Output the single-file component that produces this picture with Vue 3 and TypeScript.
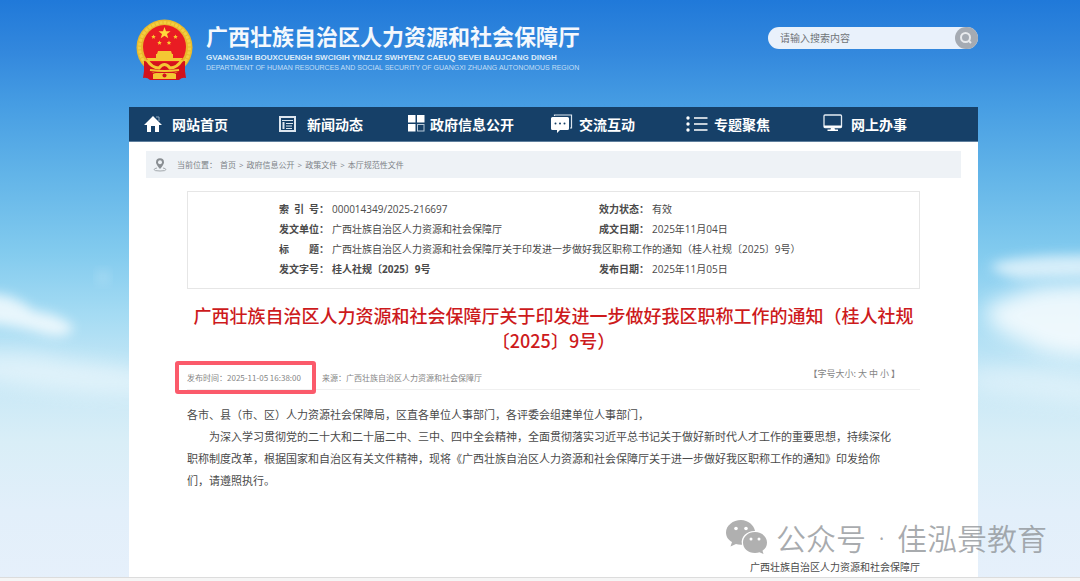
<script setup lang="ts">
import { ref } from 'vue'

type IconName = 'home' | 'news' | 'grid' | 'chat' | 'list' | 'screen'

interface NavItem {
  label: string
  icon: IconName
}

const navItems: NavItem[] = [
  { label: '网站首页', icon: 'home' },
  { label: '新闻动态', icon: 'news' },
  { label: '政府信息公开', icon: 'grid' },
  { label: '交流互动', icon: 'chat' },
  { label: '专题聚焦', icon: 'list' },
  { label: '网上办事', icon: 'screen' },
]

const crumbs: string[] = ['首页', '政府信息公开', '政策文件', '本厅规范性文件']
const sizes: string[] = ['大', '中', '小']
const keyword = ref('')
</script>

<template>
  <div class="page">
    <svg class="sky" viewBox="0 0 1080 581" preserveAspectRatio="none" aria-hidden="true">
      <defs>
        <filter id="soft" x="-30%" y="-50%" width="160%" height="200%"><feGaussianBlur stdDeviation="6" /></filter>
        <filter id="wisp" x="-30%" y="-80%" width="160%" height="260%"><feGaussianBlur stdDeviation="10" /></filter>
      </defs>
      <g fill="#fff">
        <path filter="url(#soft)" opacity=".75" d="M-20 292 L8 296 Q24 302 34 311 Q60 314 74 328 Q66 340 44 334 Q20 326 -20 322 Z" />
        <path filter="url(#wisp)" opacity=".45" d="M-20 352 Q30 348 70 360 Q110 364 150 374 L150 394 Q70 396 -20 378 Z" />
        <circle filter="url(#soft)" opacity=".25" cx="103" cy="277" r="6" />
        <path filter="url(#soft)" opacity=".65" d="M990 266 Q1010 254 1100 255 L1100 276 Q1050 278 1020 279 Q1000 276 990 266 Z" />
        <path filter="url(#wisp)" opacity=".8" d="M984 308 Q1010 294 1040 286 L1100 282 L1100 356 Q1050 360 1020 340 Q990 332 984 308 Z" />
        <path filter="url(#wisp)" opacity=".35" d="M970 372 Q1030 362 1100 378 L1100 404 Q1030 400 970 388 Z" />
      </g>
    </svg>

    <div class="shell">
      <header class="header">
        <a class="brand" href="#">
          <svg class="emblem" viewBox="0 0 57 62" role="img" aria-label="国徽">
            <path d="M9 45 L7 59 Q11 58 14 61 L43 61 Q46 58 50 59 L48 45 Z" fill="#d3121c" />
            <ellipse cx="28.500" cy="28.500" rx="28" ry="28" fill="#e9b92c" />
            <ellipse cx="28.500" cy="28.500" rx="25" ry="25" fill="none" stroke="#f3cf40" stroke-width="3" stroke-dasharray="3 1" />
            <ellipse cx="28.500" cy="28" rx="21.500" ry="22" fill="#e91c23" />
            <path d="M28.500 8 L30 12.300 H34.500 L31 15 L32.300 19.300 L28.500 16.700 L24.700 19.300 L26 15 L22.500 12.300 H27 Z" fill="#ffd93b" />
            <g fill="#fbc92f">
              <path d="M17.500 15.500 l.7 1.400 1.500.2-1.100 1.100.3 1.500-1.400-.7-1.400.7.3-1.500-1.100-1.100 1.500-.2z" />
              <path d="M39.500 15.500 l.7 1.400 1.500.2-1.100 1.100.3 1.500-1.400-.7-1.400.7.3-1.500-1.100-1.100 1.500-.2z" />
              <path d="M23.500 21.500 l.7 1.400 1.500.2-1.100 1.100.3 1.500-1.400-.7-1.400.7.3-1.500-1.100-1.100 1.500-.2z" />
              <path d="M33 21.500 l.7 1.400 1.500.2-1.100 1.100.3 1.500-1.400-.7-1.400.7.3-1.500-1.100-1.100 1.500-.2z" />
            </g>
            <path d="M22 32 H35 L36 35 H37 V39 H47 L44 42 H13 L10 39 H20 V35 H21 Z" fill="#f4c733" />
            <path d="M8 42 Q18 44 28.500 43 Q39 44 49 42 L49 56 Q42 52 38 54 H19 Q15 52 8 56 Z" fill="#d3121c" />
            <path d="M11 41 Q16 49 23 49 Q28.500 42 34 49 Q41 49 46 41" fill="none" stroke="#f4c733" stroke-width="3" />
            <path d="M14 51 Q28.500 53 43 51" fill="none" stroke="#f4c733" stroke-width="2" />
            <path d="M17 55 Q22 53 28.500 57 Q35 53 40 55 L40 60 H17 Z" fill="#f4c733" />
            <circle cx="28.500" cy="56.500" r="2" fill="#d3121c" />
          </svg>
          <span class="names">
            <strong class="name-cn">广西壮族自治区人力资源和社会保障厅</strong>
            <span class="name-za">GVANGJSIH BOUXCUENGH SWCIGIH YINZLIZ SWHYENZ CAEUQ SEVEI BAUJCANG DINGH</span>
            <span class="name-en">DEPARTMENT OF HUMAN RESOURCES AND SOCIAL SECURITY OF GUANGXI ZHUANG AUTONOMOUS REGION</span>
          </span>
        </a>
        <form class="search" role="search" @submit.prevent>
          <input v-model="keyword" type="text" placeholder="请输入搜索内容" aria-label="请输入搜索内容" />
          <button type="submit" aria-label="搜索">
            <svg viewBox="0 0 22 22" aria-hidden="true">
              <circle cx="10.500" cy="10.500" r="4.500" fill="none" stroke="#e8eaed" stroke-width="2" />
              <path d="M13.500 13.500 L16 16" stroke="#e8eaed" stroke-width="2" />
            </svg>
          </button>
        </form>
      </header>

      <nav class="nav" aria-label="主导航">
        <a v-for="item in navItems" :key="item.icon" href="#" :class="['nav-item', item.icon]">
          <svg viewBox="0 0 22 20" aria-hidden="true">
            <template v-if="item.icon === 'home'">
              <path d="M9 2 L18 11 H15 V18 H11 V12 H7 V18 H3 V11 H0 Z" fill="#fff" />
              <path d="M12 3 H15 V7" fill="none" stroke="#8fa9c0" />
            </template>
            <template v-else-if="item.icon === 'news'">
              <rect x="1" y="3" width="15" height="14" fill="none" stroke="#dce5ee" stroke-width="2" />
              <path d="M3 6.500 H14 M7 9.500 H14 M7 12 H13 M7 14.500 H13" stroke="#dce5ee" stroke-width="1.200" />
              <path d="M4.500 8 V15" stroke="#dce5ee" stroke-width="2" />
            </template>
            <template v-else-if="item.icon === 'grid'">
              <path d="M0 1 H7.500 V8.500 H0 Z M9 1 H16.500 V8.500 H9 Z M0 10 H7.500 V17.500 H0 Z" fill="#fff" />
              <rect x="9.500" y="10.500" width="6.500" height="6.500" fill="none" stroke="#b8c9d8" />
            </template>
            <template v-else-if="item.icon === 'chat'">
              <path d="M3.500 2 V1 H20.500 V14 H19" fill="none" stroke="#dce5ee" stroke-width="1.200" />
              <path d="M1.500 3 H16.500 Q18 3 18 4.500 V14.500 Q18 16 16.500 16 H9 L6 19 V16 H1.500 Q0 16 0 14.500 V4.500 Q0 3 1.500 3 Z" fill="#fff" />
              <g fill="#164068"><circle cx="4.500" cy="9.500" r="1" /><circle cx="9" cy="9.500" r="1" /><circle cx="13.500" cy="9.500" r="1" /></g>
            </template>
            <template v-else-if="item.icon === 'list'">
              <g fill="#fff"><circle cx="2" cy="4" r="1.700" /><circle cx="2" cy="10" r="1.700" /><circle cx="2" cy="16" r="1.700" /></g>
              <path d="M8 4 H21.500 M8 10 H21.500 M8 16 H21.500" stroke="#fff" stroke-width="1.500" />
            </template>
            <template v-else>
              <rect x="1" y="1" width="17.500" height="12.500" rx="1" fill="none" stroke="#e4ebf2" stroke-width="1.300" />
              <path d="M1 12.500 H18.500" stroke="#fff" stroke-width="2" />
              <path d="M8 14 H11.500 L12 15.500 H15 V17 H4.500 V15.500 H7.500 Z" fill="#fff" />
            </template>
          </svg>
          <span>{{ item.label }}</span>
        </a>
      </nav>

      <main class="main">
        <div class="crumbs">
          <svg viewBox="0 0 14 14" aria-hidden="true">
            <path d="M7 11 Q3 6.500 3 4.200 A4 4 0 0 1 11 4.200 Q11 6.500 7 11 Z" fill="#8a8f93" />
            <circle cx="7" cy="4.300" r="2" fill="#eef2f6" />
            <path d="M4 10 Q1 10.500 1 11.500 Q1 13 7 13 Q13 13 13 11.500 Q13 10.500 10 10" fill="none" stroke="#a3a8ac" />
          </svg>
          <span class="crumb-label">当前位置：</span>
          <template v-for="(crumb, i) in crumbs" :key="crumb">
            <span v-if="i > 0">&gt;</span>
            <a href="#">{{ crumb }}</a>
          </template>
        </div>

        <article class="article">
          <div class="info">
            <table>
              <tbody>
                <tr>
                  <th scope="row"><span class="spread"><i>索</i><i>引</i><i>号：</i></span></th>
                  <td class="left">000014349/2025-216697</td>
                  <th scope="row">效力状态：</th>
                  <td>有效</td>
                </tr>
                <tr>
                  <th scope="row">发文单位：</th>
                  <td class="left">广西壮族自治区人力资源和社会保障厅</td>
                  <th scope="row">成文日期：</th>
                  <td>2025年11月04日</td>
                </tr>
                <tr>
                  <th scope="row"><span class="spread"><i>标</i><i>题：</i></span></th>
                  <td colspan="3">广西壮族自治区人力资源和社会保障厅关于印发进一步做好我区职称工作的通知（桂人社规〔2025〕9号）</td>
                </tr>
                <tr>
                  <th scope="row">发文字号：</th>
                  <td class="left"><b>桂人社规〔2025〕9号</b></td>
                  <th scope="row">发布日期：</th>
                  <td>2025年11月05日</td>
                </tr>
              </tbody>
            </table>
          </div>

          <h1>广西壮族自治区人力资源和社会保障厅关于印发进一步做好我区职称工作的通知（桂人社规<br />〔2025〕9号）</h1>

          <div class="meta">
            <time class="marked" datetime="2025-11-05T16:38:00">发布时间：2025-11-05 16:38:00</time>
            <span class="source">来源：广西壮族自治区人力资源和社会保障厅</span>
            <span class="sizes">【字号大小:<button v-for="s in sizes" :key="s" type="button">{{ s }}</button>】</span>
          </div>

          <div class="body">
            <p>各市、县（市、区）人力资源社会保障局，区直各单位人事部门，各评委会组建单位人事部门，</p>
            <p class="indent">为深入学习贯彻党的二十大和二十届二中、三中、四中全会精神，全面贯彻落实习近平总书记关于做好新时代人才工作的重要思想，持续深化<br />职称制度改革，根据国家和自治区有关文件精神，现将《广西壮族自治区人力资源和社会保障厅关于进一步做好我区职称工作的通知》印发给你<br />们，请遵照执行。</p>
          </div>

          <p class="signature">广西壮族自治区人力资源和社会保障厅</p>
        </article>
      </main>
    </div>

    <div class="strip"></div>

    <div class="watermark">
      <svg viewBox="0 0 41 34" aria-hidden="true">
        <path d="M15 0 C7 0 0 5.500 0 12.500 C0 17 2.500 20 6 22 L4.500 26.500 L10 24 Q12 24.700 15 24.700 H16 C14 16 22 10.500 29 11 C28 5 22 0 15 0 Z" />
        <path d="M29 12 C22 12 17 17 17 22.500 C17 28.500 22 33 29 33 Q31.500 33 33.500 32.200 L37.500 34 L36.500 30.700 C39.500 28.700 41 26 41 22.500 C41 17 36 12 29 12 Z" />
        <g fill="#fff"><circle cx="10" cy="8.500" r="1.800" /><circle cx="20" cy="8.500" r="1.800" /><circle cx="25" cy="19" r="1.500" /><circle cx="33" cy="19" r="1.500" /></g>
      </svg>
      <span>公众号</span>
      <span class="dot">·</span>
      <span>佳泓景教育</span>
    </div>
  </div>
</template>

<style>
body {
  margin: 0;
}
</style>

<style scoped>
.page {
  position: relative;
  display: flex;
  flex-direction: column;
  min-height: 100vh;
  overflow: hidden;
  font-family: "Open Sans", "Noto Sans CJK SC", sans-serif;
  color: #4a4a4a;
  background: linear-gradient(#2079d9 0%, #3388dd 9%, #469de3 18%, #62b4e8 30%, #81caee 43%, #a4dbf3 54%, #c5e7f6 64%, #d9eef7 76%, #e2effa 88%, #e6f0fb 100%);
}
.sky {
  position: absolute;
  inset: 0;
  width: 100%;
  height: 100%;
}
.shell {
  position: relative;
  flex: 1;
  display: flex;
  flex-direction: column;
  padding: 0 102px 0 129px;
}
a {
  color: inherit;
  text-decoration: none;
}
.header {
  display: flex;
  justify-content: space-between;
  align-items: flex-start;
  height: 88px;
  padding: 19px 0 0 7px;
}
.brand {
  display: flex;
  gap: 13px;
  color: #fff;
}
.emblem {
  width: 57px;
  height: 62px;
}
.names {
  display: flex;
  flex-direction: column;
  white-space: nowrap;
  padding-top: 2px;
}
.name-cn {
  margin-bottom: 3px;
  font: 700 22px/28px "Noto Sans CJK SC", sans-serif;
  color: #f4f8fd;
}
.name-za {
  font: 700 8px/11px "Liberation Sans", sans-serif;
  color: #dcebf9;
}
.name-en {
  font: 400 7px/10px "Liberation Sans", sans-serif;
  color: #c3def5;
}
.search {
  display: flex;
  width: 210px;
  height: 22px;
  margin-top: 8px;
  border-radius: 11px;
  background: #e9f1fb;
}
.search input {
  flex: 1;
  min-width: 0;
  padding: 0 0 2px 12px;
  border: 0;
  outline: 0;
  background: transparent;
  font: 10px "Noto Sans CJK SC", sans-serif;
  color: #555;
}
.search input::placeholder {
  color: #707478;
  opacity: 1;
}
.search button {
  width: 23px;
  height: 22px;
  padding: 0;
  border: 0;
  border-radius: 11px;
  background: #a5abb3;
}
.search button svg {
  display: block;
  width: 22px;
  height: 22px;
}
.nav {
  display: grid;
  grid-template-columns: 135fr 129fr 143fr 135fr 137fr 155fr;
  padding-left: 15px;
  height: 34px;
  background: #164068;
  border-bottom: 1px solid #5f7f9d;
}
.nav-item {
  display: flex;
  align-items: center;
  gap: 6px;
  font: 700 14px/20px "Noto Sans CJK SC", sans-serif;
  color: #fff;
  white-space: nowrap;
}
.nav-item svg {
  flex: none;
  width: 22px;
  height: 20px;
}
.nav-item.grid {
  gap: 0;
}
.main {
  flex: 1;
  padding: 9px 17px 0;
  background: #fff;
}
.crumbs {
  display: flex;
  align-items: center;
  gap: 3px;
  height: 27px;
  padding-left: 7px;
  background: #eef2f6;
  font-size: 8px;
  color: #7d8287;
}
.crumbs svg {
  width: 14px;
  height: 14px;
  margin-right: 7px;
}
.article {
  padding: 0 41px;
}
.info {
  margin-top: 13px;
  padding: 7px 0 9px 91px;
  border: 1px solid #e6e6e6;
  font-size: 10px;
}
.info table {
  border-collapse: collapse;
  width: 100%;
}
.info th,
.info td {
  height: 20px;
  padding: 0;
  line-height: 20px;
  text-align: left;
  white-space: nowrap;
}
.info th {
  width: 53px;
  font-weight: 700;
}
.info .left {
  width: 267px;
}
.spread {
  display: flex;
  justify-content: space-between;
  width: 50px;
}
.spread i {
  font-style: normal;
}
h1 {
  margin: 14px 0 0;
  font: 500 18px/25px "Noto Sans CJK SC", sans-serif;
  color: #cd1a1c;
  text-align: center;
}
.meta {
  display: flex;
  align-items: center;
  height: 36px;
  border-bottom: 1px solid #f0f0f0;
  font: 8px/12px "Noto Sans CJK SC", sans-serif;
  color: #858585;
}
.marked,
.source {
  padding-top: 14px;
}
.marked {
  position: relative;
  width: 135px;
}
.marked::after {
  content: "";
  position: absolute;
  left: -12px;
  right: 6px;
  top: 3px;
  height: 25px;
  border: 4px solid #fb5a6b;
  border-radius: 3px;
}
.sizes {
  display: flex;
  gap: 2px;
  margin-left: auto;
  padding: 6px 20px 0 0;
  font-size: 9px;
}
.sizes button {
  padding: 0;
  border: 0;
  background: none;
  font: inherit;
  color: inherit;
}
.body {
  padding-top: 13px;
  font: 11px/22px "Noto Sans CJK SC", sans-serif;
}
.body p {
  margin: 0;
}
.body .indent {
  text-indent: 2em;
}
.signature {
  margin: 66px 0 0;
  font: 10px/20px "Noto Sans CJK SC", sans-serif;
  text-align: right;
}
.strip {
  position: relative;
  height: 3px;
  border-top: 1px solid #dcdcdc;
  background: #f5f5f5;
}
.watermark {
  position: absolute;
  right: 33px;
  bottom: 22px;
  display: flex;
  align-items: center;
  font: 30px/44px "Noto Sans CJK SC", sans-serif;
  font-weight: 350;
  color: rgba(140, 144, 148, 0.75);
}
.watermark svg {
  width: 41px;
  height: 34px;
  margin-right: 9px;
  fill: #b0b0b0;
}
.watermark .dot {
  width: 31px;
  font-family: "Open Sans", sans-serif;
  text-align: center;
}
</style>
